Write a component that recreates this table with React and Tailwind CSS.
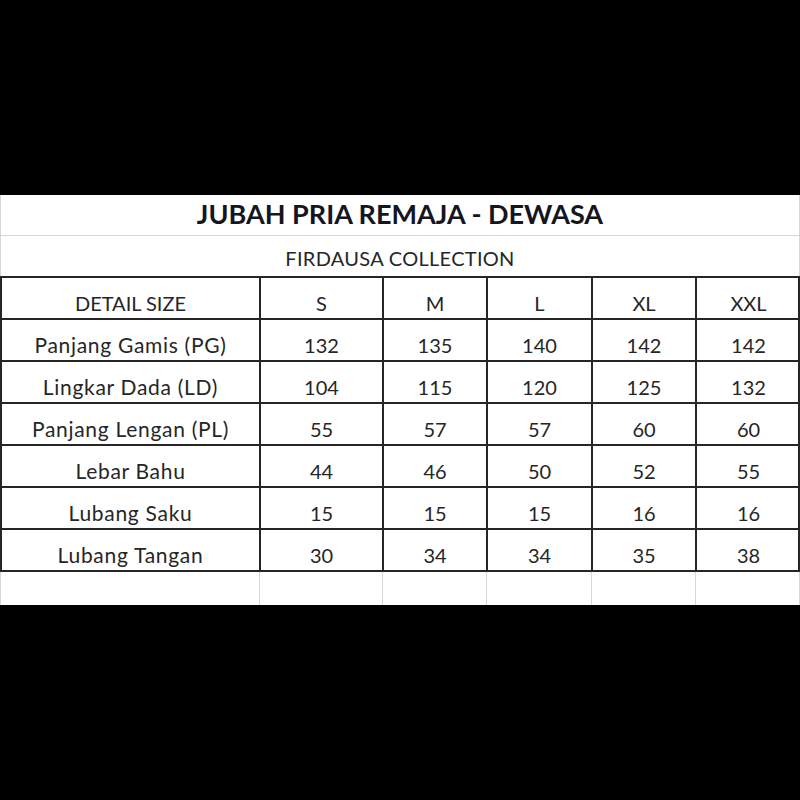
const sizes = ["S", "M", "L", "XL", "XXL"]

const rows = [
  { label: "Panjang Gamis (PG)", values: ["132", "135", "140", "142", "142"] },
  { label: "Lingkar Dada (LD)", values: ["104", "115", "120", "125", "132"] },
  { label: "Panjang Lengan (PL)", values: ["55", "57", "57", "60", "60"] },
  { label: "Lebar Bahu", values: ["44", "46", "50", "52", "55"] },
  { label: "Lubang Saku", values: ["15", "15", "15", "16", "16"] },
  { label: "Lubang Tangan", values: ["30", "34", "34", "35", "38"] }
]

const cols = "grid grid-cols-[259px_123px_104px_105px_104px_105px]"

const Cell = ({ children, label }) => (
  <div
    className={`flex h-[42px] items-end justify-center border-b-2 border-l-2 border-[#262626] leading-[24px] text-[#262626] ${
      label ? "pb-[3px] text-[21px] tracking-[0.7px]" : "pb-[3px] text-[20px]"
    }`}
  >
    {children}
  </div>
)

export default function App() {
  return (
    <div className="flex h-[800px] w-[800px] flex-col bg-black" style={{ fontFamily: "Lato, 'Open Sans', sans-serif" }}>
      <div className="h-[195px]" />
      <div className="bg-white">
        {/* Title */}
        <div className="flex h-[41px] items-end justify-center border-b border-l border-r border-[#d6d6d6] pb-[5px] text-[27px] font-bold leading-[32px] text-[#15151f]">
          JUBAH PRIA REMAJA - DEWASA
        </div>
        <div className="flex h-[40px] items-end justify-center border-l border-r border-[#d6d6d6] pb-[6px] text-[20px] leading-[24px] tracking-[0.3px] text-[#262626]">
          FIRDAUSA COLLECTION
        </div>

        {/* Size table */}
        <div className={`${cols} border-t-2 border-r-2 border-[#262626]`}>
          <Cell>DETAIL SIZE</Cell>
          {sizes.map((s) => (
            <Cell key={s}>{s}</Cell>
          ))}
          {rows.map((row) => (
            <div key={row.label} className="contents">
              <Cell label>{row.label}</Cell>
              {row.values.map((v, i) => (
                <Cell key={i}>{v}</Cell>
              ))}
            </div>
          ))}
        </div>

        {/* Empty excel row */}
        <div className={`${cols} h-[33px]`}>
          <div className="border-l border-[#d6d6d6]" />
          <div className="border-l border-[#d6d6d6]" />
          <div className="border-l border-[#d6d6d6]" />
          <div className="border-l border-[#d6d6d6]" />
          <div className="border-l border-[#d6d6d6]" />
          <div className="border-l border-r border-[#d6d6d6]" />
        </div>
      </div>
    </div>
  )
}
